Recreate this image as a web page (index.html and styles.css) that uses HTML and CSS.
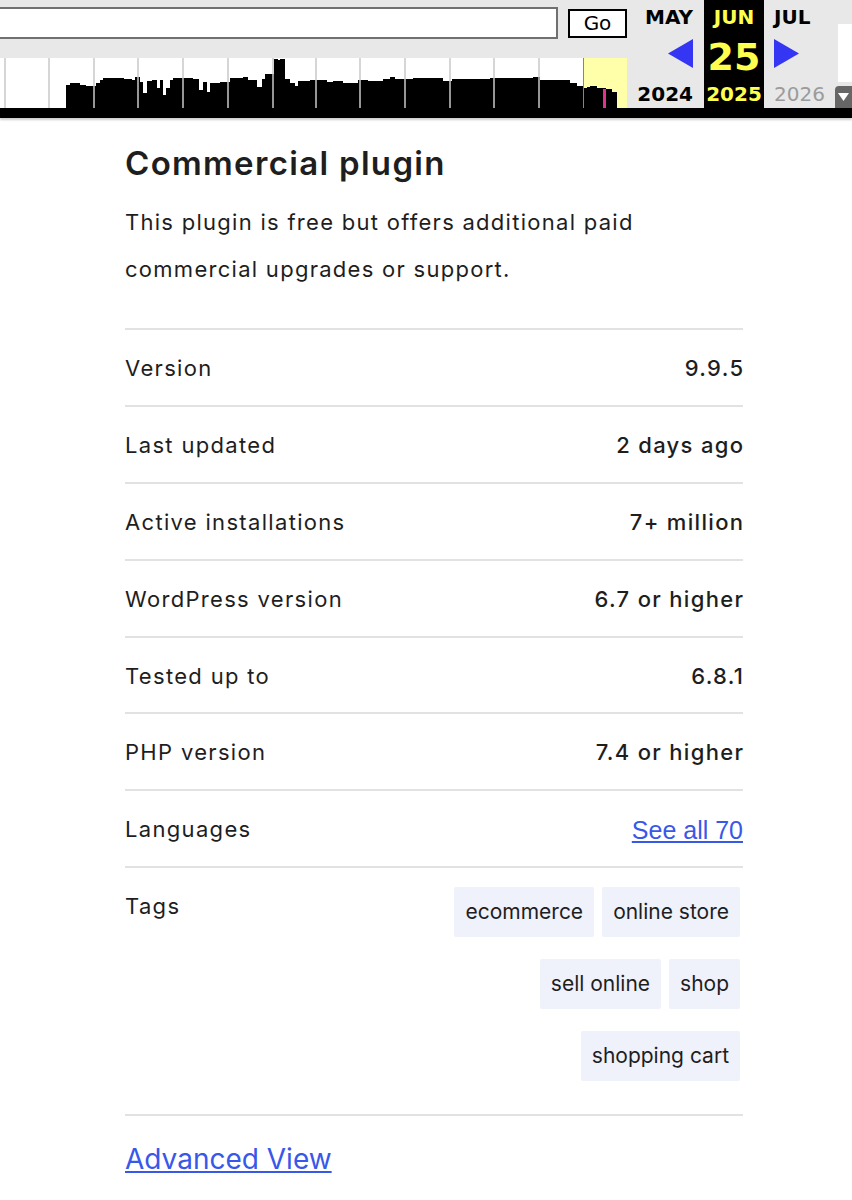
FILE: index.html
```html
<!DOCTYPE html>
<html lang="en">
<head>
<meta charset="utf-8">
<title>Commercial plugin</title>
<link rel="stylesheet" href="styles.css">
</head>
<body>
<div class="wb-toolbar">
  <div class="wb-left">
    <div class="wb-search">
      <div class="wb-input"></div>
      <div class="wb-go">Go</div>
    </div>
    <div class="wb-spark">
      <svg width="627" height="50" viewBox="0 58 627 50" xmlns="http://www.w3.org/2000/svg">
        <rect x="0" y="58" width="583" height="50" fill="#ffffff"/>
        <rect x="583" y="58" width="44" height="50" fill="#ffffaa"/>
        <path fill="#000" d="M66 108 V85 H70 V83 H80 V85 H86 V86 H96 V83 H100 V80 H103 V78 H124 V79 H132 V80 H135 V77 H140 V82 H143 V93 H147 V81 H152 V80 H157 V88 H160 V80 H163 V95 H166 V88 H170 V80 H173 V78 H193 V79 H199 V90 H203 V82 H207 V92 H210 V83 H220 V82 H230 V78 H243 V77 H248 V80 H257 V87 H262 V79 H265 V74 H274 V59 H278 V60 H280 V59 H285 V79 H290 V83 H295 V86 H298 V81 H310 V80 H327 V82 H333 V81 H343 V83 H358 V80 H368 V81 H383 V79 H390 V77 H395 V79 H413 V78 H443 V81 H452 V79 H490 V78 H533 V77 H540 V80 H570 V83 H577 V86 H583 V88 H587 V87 H590 V86 H597 V88 H606 V89 H612 V92 H617 V108 Z"/>
        <rect x="603" y="89" width="3" height="19" fill="#e0338f"/>
        <g stroke="#c9c9c9" stroke-width="1.5">
          <line x1="5" y1="58" x2="5" y2="108"/>
          <line x1="49" y1="58" x2="49" y2="108"/>
          <line x1="94" y1="58" x2="94" y2="108"/>
          <line x1="138" y1="58" x2="138" y2="108"/>
          <line x1="183" y1="58" x2="183" y2="108"/>
          <line x1="228" y1="58" x2="228" y2="108"/>
          <line x1="273" y1="58" x2="273" y2="108"/>
          <line x1="316" y1="58" x2="316" y2="108"/>
          <line x1="360" y1="58" x2="360" y2="108"/>
          <line x1="405" y1="58" x2="405" y2="108"/>
          <line x1="450" y1="58" x2="450" y2="108"/>
          <line x1="494" y1="58" x2="494" y2="108"/>
          <line x1="539" y1="58" x2="539" y2="108"/>
        </g>
        <line x1="583.5" y1="58" x2="583.5" y2="108" stroke="#8a8a60" stroke-width="1"/>
      </svg>
    </div>
  </div>
  <div class="wb-months">
    <div class="wb-month wb-prev">
      <div class="wb-mname">MAY</div>
      <div class="wb-mid">
        <svg width="25" height="29" viewBox="0 0 25 29" xmlns="http://www.w3.org/2000/svg"><polygon points="0,14.5 25,0 25,29" fill="#3535f4"/></svg>
      </div>
      <div class="wb-year">2024</div>
    </div>
    <div class="wb-month wb-cur">
      <div class="wb-mname">JUN</div>
      <div class="wb-mid wb-day">25</div>
      <div class="wb-year">2025</div>
    </div>
    <div class="wb-month wb-next">
      <div class="wb-mname">JUL</div>
      <div class="wb-mid">
        <svg width="25" height="29" viewBox="0 0 25 29" xmlns="http://www.w3.org/2000/svg"><polygon points="0,0 25,14.5 0,29" fill="#3535f4"/></svg>
      </div>
      <div class="wb-year">2026</div>
    </div>
  </div>
  <div class="wb-side">
    <div class="wb-thumb"></div>
    <div class="wb-expand">
      <svg width="11" height="8" viewBox="0 0 11 8" xmlns="http://www.w3.org/2000/svg"><polygon points="0,0 11,0 5.5,8" fill="#fff"/></svg>
    </div>
  </div>
</div>

<main class="plugin-meta">
  <h2 class="meta-title">Commercial plugin</h2>
  <p class="meta-desc">This plugin is free but offers additional paid commercial upgrades or support.</p>
  <ul class="meta-list">
    <li class="meta-row"><span class="meta-label">Version</span><strong class="meta-value">9.9.5</strong></li>
    <li class="meta-row"><span class="meta-label">Last updated</span><strong class="meta-value">2 days ago</strong></li>
    <li class="meta-row"><span class="meta-label">Active installations</span><strong class="meta-value">7+ million</strong></li>
    <li class="meta-row"><span class="meta-label">WordPress version</span><strong class="meta-value">6.7 or higher</strong></li>
    <li class="meta-row"><span class="meta-label">Tested up to</span><strong class="meta-value">6.8.1</strong></li>
    <li class="meta-row"><span class="meta-label">PHP version</span><strong class="meta-value">7.4 or higher</strong></li>
    <li class="meta-row"><span class="meta-label">Languages</span><a class="meta-langs" href="#">See all 70</a></li>
    <li class="meta-row meta-tags-row">
      <span class="meta-label">Tags</span>
      <div class="meta-tags">
        <a class="tag" href="#">ecommerce</a>
        <a class="tag" href="#">online store</a>
        <a class="tag" href="#">sell online</a>
        <a class="tag" href="#">shop</a>
        <a class="tag" href="#">shopping cart</a>
      </div>
    </li>
  </ul>
  <div class="meta-footer"><a class="advanced-link" href="#">Advanced View</a></div>
</main>
</body>
</html>
```

FILE: styles.css
```css
html, body {
  margin: 0;
  padding: 0;
  background: #ffffff;
}

body {
  font-family: Inter, "Noto Sans", sans-serif;
  color: #1e1e1e;
}

/* ---------- Wayback toolbar ---------- */
.wb-toolbar {
  display: flex;
  height: 108px;
  background: #e8e8e8;
  border-bottom: 10px solid #000;
  box-shadow: 0 2px 2px rgba(0, 0, 0, 0.2);
  font-family: "DejaVu Sans", sans-serif;
  overflow: hidden;
}

.wb-left {
  width: 627px;
  flex: none;
  display: flex;
  flex-direction: column;
  justify-content: space-between;
}

.wb-search {
  display: flex;
  align-items: flex-start;
  padding-top: 7px;
}

.wb-input {
  width: 556px;
  height: 28px;
  background: #fff;
  border: 2px solid #707070;
  border-left: none;
}

.wb-go {
  margin-left: 10px;
  margin-top: 2px;
  width: 55px;
  height: 25px;
  border: 2px solid #000;
  background: #fff;
  color: #000;
  font-size: 20px;
  line-height: 25px;
  text-align: center;
}

.wb-spark {
  height: 50px;
}

.wb-spark svg {
  display: block;
}

.wb-months {
  display: flex;
  flex: none;
}

.wb-month {
  display: flex;
  flex-direction: column;
  box-sizing: border-box;
  font-size: 20px;
  font-weight: bold;
  color: #000;
}

.wb-prev {
  width: 77px;
  align-items: flex-end;
  padding-right: 11px;
}

.wb-cur {
  width: 60px;
  align-items: center;
  background: #000;
  color: #ffff4d;
}

.wb-next {
  width: 71px;
  align-items: flex-start;
  padding-left: 10px;
}

.wb-mname {
  height: 34px;
  line-height: 34px;
}

.wb-mid {
  height: 46px;
}

.wb-mid svg {
  display: block;
  margin-top: 5px;
}

.wb-day {
  font-size: 38px;
  line-height: 46px;
}

.wb-year {
  height: 28px;
  line-height: 28px;
}

.wb-next .wb-year {
  color: #9b9b9b;
  font-weight: normal;
}

.wb-side {
  width: 17px;
  flex: none;
  display: flex;
  flex-direction: column;
  align-items: flex-end;
}

.wb-thumb {
  margin-top: 24px;
  width: 14px;
  height: 58px;
  background: #fff;
}

.wb-expand {
  margin-top: 4px;
  width: 17px;
  height: 22px;
  background: #666;
  border-radius: 4px 0 0 0;
  display: flex;
  align-items: center;
  justify-content: center;
}

/* ---------- Plugin meta ---------- */
.plugin-meta {
  width: 618px;
  margin-left: 125px;
  padding-top: 24px;
}

.meta-title {
  margin: 0;
  font-size: 33px;
  font-weight: 600;
  line-height: 43px;
  letter-spacing: 0.04em;
}

.meta-desc {
  margin: 14px 0 0;
  font-size: 22px;
  line-height: 47px;
  letter-spacing: 0.058em;
}

.meta-list {
  margin: 35px 0 0;
  padding: 0;
  list-style: none;
}

.meta-row {
  display: flex;
  justify-content: space-between;
  align-items: center;
  border-top: 2px solid #e2e2e2;
  padding: 20px 0 18.9px;
  font-size: 22px;
  line-height: 36px;
  letter-spacing: 0.06em;
}

.meta-label,
.meta-value {
  display: block;
  height: 36px;
}

.meta-value {
  font-weight: 500;
  margin-right: -0.06em;
}

.meta-langs {
  display: block;
  height: 36px;
  font-family: "Liberation Sans", Arial, sans-serif;
  font-size: 25px;
  line-height: 38px;
  letter-spacing: 0;
  color: #3858e9;
}

.meta-tags-row {
  align-items: flex-start;
  padding-bottom: 33px;
}

.meta-tags {
  width: 306px;
  margin-top: -1px;
  padding-right: 3px;
  display: flex;
  flex-wrap: wrap;
  justify-content: flex-end;
  gap: 22px 8px;
  letter-spacing: 0;
}

.tag {
  display: block;
  height: 50px;
  line-height: 50px;
  padding: 0 11px;
  background: #eff1fb;
  border-radius: 2px;
  color: #1e1e1e;
  font-size: 21px;
  text-decoration: none;
}

.meta-footer {
  border-top: 2px solid #e2e2e2;
  padding-top: 22px;
}

.advanced-link {
  font-size: 28px;
  line-height: 43.5px;
  color: #3858e9;
}
```
